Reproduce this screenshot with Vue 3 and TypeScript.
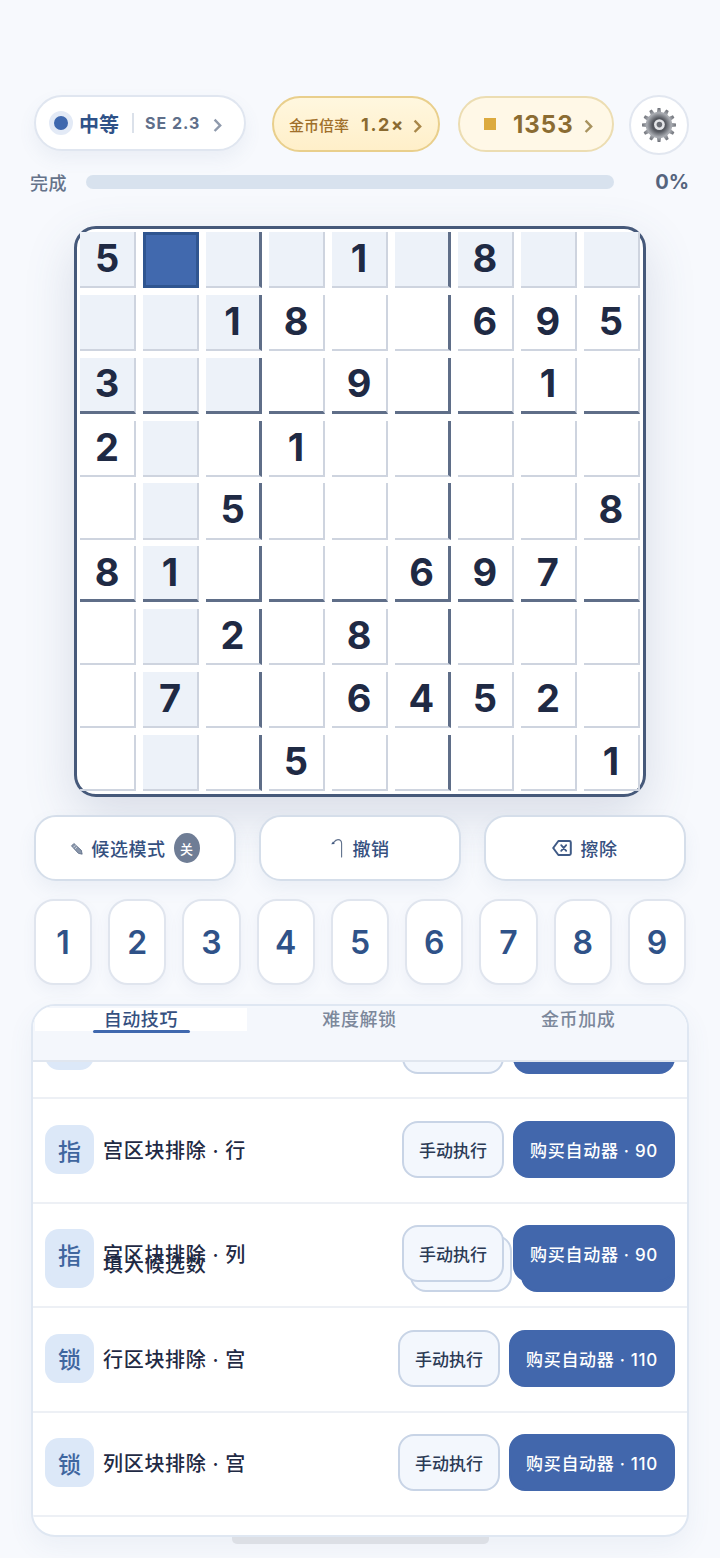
<script setup lang="ts">
interface Skill {
  icon: string
  title: string
  price: number
}

// 0 = empty cell
const puzzle: number[][] = [
  [5, 0, 0, 0, 1, 0, 8, 0, 0],
  [0, 0, 1, 8, 0, 0, 6, 9, 5],
  [3, 0, 0, 0, 9, 0, 0, 1, 0],
  [2, 0, 0, 1, 0, 0, 0, 0, 0],
  [0, 0, 5, 0, 0, 0, 0, 0, 8],
  [8, 1, 0, 0, 0, 6, 9, 7, 0],
  [0, 0, 2, 0, 8, 0, 0, 0, 0],
  [0, 7, 0, 0, 6, 4, 5, 2, 0],
  [0, 0, 0, 5, 0, 0, 0, 0, 1],
]

const selected = { row: 0, col: 1 }

const cells = puzzle.flatMap((line, row) =>
  line.map((value, col) => ({
    key: `${row}-${col}`,
    value,
    selected: row === selected.row && col === selected.col,
    related: row === selected.row || col === selected.col || (row < 3 && col < 3),
    boxRight: col === 2 || col === 5,
    boxBottom: row === 2 || row === 5,
  })),
)

const digits = [1, 2, 3, 4, 5, 6, 7, 8, 9]
const tabs = ['自动技巧', '难度解锁', '金币加成']

const skills: Skill[] = [
  { icon: '指', title: '宫区块排除 · 行', price: 90 },
  { icon: '指', title: '宫区块排除 · 行', price: 90 },
  { icon: '指', title: '宫区块排除 · 列', price: 90 },
  { icon: '锁', title: '行区块排除 · 宫', price: 110 },
  { icon: '锁', title: '列区块排除 · 宫', price: 110 },
]

const ghost: Skill = { icon: '填', title: '填入候选数', price: 11 }

// 12 tooth gear outline
const gearPath = (() => {
  const points: string[] = []
  const teeth = 12
  for (let i = 0; i < teeth; i++) {
    const a = (i / teeth) * Math.PI * 2
    const step = (Math.PI * 2) / teeth
    const ring: [number, number][] = [
      [13.2, a - step * 0.3],
      [17, a - step * 0.16],
      [17, a + step * 0.16],
      [13.2, a + step * 0.3],
    ]
    for (const [r, t] of ring) {
      points.push(`${(18 + r * Math.cos(t)).toFixed(2)} ${(18 + r * Math.sin(t)).toFixed(2)}`)
    }
  }
  return `M${points.join('L')}Z`
})()
</script>

<template>
  <div class="page">
    <header class="top-bar">
      <button class="level-pill">
        <span class="level-dot"></span>
        <span class="level-name">中等</span>
        <span class="level-divider"></span>
        <span class="level-se">SE 2.3</span>
        <svg class="chevron" width="9" height="14" viewBox="0 0 9 14">
          <path d="M1.6 1.6 7.2 7.4 1.6 13" fill="none" stroke="#8f9aac" stroke-width="2.4" />
        </svg>
      </button>
      <button class="rate-pill">
        <span class="rate-label">金币倍率</span>
        <span class="rate-value">1.2×</span>
        <svg class="chevron" width="9" height="14" viewBox="0 0 9 14">
          <path d="M1.6 1.6 7.2 7.4 1.6 13" fill="none" stroke="#a8874a" stroke-width="2.4" />
        </svg>
      </button>
      <button class="coin-pill">
        <span class="coin-mark"></span>
        <span class="coin-value">1353</span>
        <svg class="chevron" width="9" height="14" viewBox="0 0 9 14">
          <path d="M1.6 1.6 7.2 7.4 1.6 13" fill="none" stroke="#a8935f" stroke-width="2.4" />
        </svg>
      </button>
      <button class="settings" aria-label="设置">
        <svg width="36" height="36" viewBox="0 0 36 36">
          <defs>
            <radialGradient id="gearFill" cx="50%" cy="50%" r="50%">
              <stop offset="0%" stop-color="#4c4f56" />
              <stop offset="45%" stop-color="#63666d" />
              <stop offset="72%" stop-color="#a9acb2" />
              <stop offset="100%" stop-color="#6f7279" />
            </radialGradient>
          </defs>
          <path :d="gearPath" fill="url(#gearFill)" />
          <circle cx="18" cy="18" r="7.2" fill="#55585f" />
          <circle cx="18.4" cy="17.6" r="5.4" fill="#e4e5e8" />
          <circle cx="18.4" cy="17.6" r="2.8" fill="#6a6d74" />
        </svg>
      </button>
    </header>

    <section class="progress-row">
      <span class="progress-label">完成</span>
      <div class="progress-track"></div>
      <span class="progress-value">0%</span>
    </section>

    <section class="board">
      <div
        v-for="cell in cells"
        :key="cell.key"
        class="cell"
        :class="{
          related: cell.related,
          selected: cell.selected,
          'box-right': cell.boxRight,
          'box-bottom': cell.boxBottom,
        }"
      >
        {{ cell.value || '' }}
      </div>
    </section>

    <section class="actions">
      <button class="action">
        <svg width="13" height="13" viewBox="0 0 14 14">
          <path d="M1.6 4.2 4.2 1.6l8 7.4.9 4.1-4.1-.9z" fill="#8794a9" stroke="#5d6c86" stroke-width=".9" stroke-linejoin="round" />
          <path d="M3.6 5.8 5.8 3.6M5.4 7.4l2.2-2.2" stroke="#eef1f6" stroke-width=".8" />
        </svg>
        <span>候选模式</span>
        <span class="toggle-badge">关</span>
      </button>
      <button class="action">
        <svg width="14" height="20" viewBox="0 0 14 20">
          <path d="M11.6 19V5.6C11.6 3 10 1.6 8 1.6 6.4 1.6 5 2.6 3.6 4.6" fill="none" stroke="#5f708c" stroke-width="1.1" stroke-linecap="round" />
          <path d="M1.2 6.2 4.8 6 3 3.4z" fill="#41587f" />
        </svg>
        <span>撤销</span>
      </button>
      <button class="action">
        <svg width="20" height="18" viewBox="0 0 20 18">
          <path d="M6.4 2h11a1.4 1.4 0 0 1 1.4 1.4v11.2a1.4 1.4 0 0 1-1.4 1.4h-11L1.2 9z" fill="none" stroke="#3f5a86" stroke-width="2" stroke-linejoin="round" />
          <path d="M9.2 6.2l5 5.6M14.2 6.2l-5 5.6" stroke="#3f5a86" stroke-width="1.8" stroke-linecap="round" />
        </svg>
        <span>擦除</span>
      </button>
    </section>

    <section class="keypad">
      <button v-for="digit in digits" :key="digit" class="key">{{ digit }}</button>
    </section>

    <section class="panel">
      <nav class="tabs">
        <div v-for="(tab, i) in tabs" :key="tab" class="tab" :class="{ active: i === 0 }">{{ tab }}</div>
      </nav>
      <div class="list">
        <div v-for="(skill, i) in skills" :key="i" class="row">
          <div v-if="i === 2" class="row-body ghost">
            <span class="skill-icon">{{ ghost.icon }}</span>
            <span class="skill-title">{{ ghost.title }}</span>
            <button class="manual">手动执行</button>
            <button class="buy">购买自动器 · {{ ghost.price }}</button>
          </div>
          <div class="row-body">
            <span class="skill-icon">{{ skill.icon }}</span>
            <span class="skill-title">{{ skill.title }}</span>
            <button class="manual">手动执行</button>
            <button class="buy">购买自动器 · {{ skill.price }}</button>
          </div>
        </div>
      </div>
    </section>
    <div class="home-bar"></div>
  </div>
</template>

<style>
html,
body {
  margin: 0;
  background: #f7f9fd;
}
</style>

<style scoped>
.page {
  width: 720px;
  height: 1558px;
  box-sizing: border-box;
  padding-top: 95px;
  overflow: hidden;
  background: #f7f9fd;
  font-family: Inter, 'Noto Sans CJK SC', sans-serif;
  color: #1f2a44;
}

button {
  font-family: inherit;
  padding: 0;
  cursor: pointer;
}

.top-bar {
  display: flex;
  align-items: flex-start;
  padding-left: 34px;
}

.level-pill,
.rate-pill,
.coin-pill {
  display: flex;
  align-items: center;
  box-sizing: border-box;
  height: 56px;
  border-radius: 28px;
}

.level-pill {
  width: 212px;
  padding-left: 13px;
  background: #fff;
  border: 2px solid #e0e6f0;
  box-shadow: 0 8px 18px rgba(90, 110, 150, 0.08);
}

.level-dot {
  width: 14px;
  height: 14px;
  border-radius: 50%;
  background: #3f68ae;
  border: 5px solid #e3eaf6;
}

.level-name {
  margin-left: 6px;
  font-size: 20px;
  font-weight: 700;
  color: #2f5288;
}

.level-divider {
  width: 2px;
  height: 20px;
  margin-left: 13px;
  background: #dbe1ea;
}

.level-se {
  margin-left: 11px;
  font-size: 16px;
  font-weight: 700;
  letter-spacing: 1px;
  color: #5f6f8a;
}

.chevron {
  flex: none;
  margin-top: 3px;
  margin-left: 13px;
}

.rate-pill {
  width: 168px;
  margin-left: 26px;
  margin-top: 1px;
  padding-left: 15px;
  background: linear-gradient(180deg, #fff7df, #ffefc9);
  border: 2px solid #e9cf8c;
}

.rate-label {
  font-size: 15px;
  font-weight: 500;
  color: #a06f2a;
}

.rate-value {
  margin-left: 12px;
  font-size: 18px;
  font-weight: 700;
  letter-spacing: 1.6px;
  color: #8a6a30;
}

.rate-pill .chevron {
  margin-left: 8px;
}

.coin-pill {
  width: 156px;
  margin-left: 18px;
  margin-top: 1px;
  padding-left: 24px;
  background: #fff8e7;
  border: 2px solid #ecddb2;
}

.coin-mark {
  width: 12px;
  height: 12px;
  background: #dcaa3e;
}

.coin-value {
  margin-left: 17px;
  font-size: 24px;
  font-weight: 700;
  letter-spacing: 1px;
  color: #8b6c32;
}

.coin-pill .chevron {
  margin-left: 10px;
}

.settings {
  display: flex;
  align-items: center;
  justify-content: center;
  box-sizing: border-box;
  width: 60px;
  height: 60px;
  margin-left: 15px;
  border-radius: 50%;
  background: #fff;
  border: 2px solid #e2e7f0;
}

.progress-row {
  display: flex;
  align-items: center;
  height: 22px;
  margin-top: 16px;
  padding: 0 31px 0 30px;
}

.progress-label {
  width: 56px;
  font-size: 18px;
  font-weight: 500;
  letter-spacing: 0.5px;
  color: #65738a;
}

.progress-track {
  width: 528px;
  height: 14px;
  border-radius: 7px;
  background: #d8e2ee;
}

.progress-value {
  margin-left: auto;
  font-size: 20px;
  font-weight: 700;
  color: #55647d;
}

.board {
  display: grid;
  grid-template-columns: repeat(9, 1fr);
  grid-template-rows: repeat(9, 1fr);
  gap: 6.8px;
  box-sizing: border-box;
  width: 572px;
  height: 571px;
  margin: 33px 0 0 74px;
  padding: 3px;
  background: #fff;
  border: 3px solid #46597a;
  border-radius: 22px;
  box-shadow: 0 18px 50px rgba(70, 90, 130, 0.18);
}

.cell {
  display: flex;
  align-items: center;
  justify-content: center;
  box-sizing: border-box;
  padding-bottom: 2px;
  font-size: 38px;
  font-weight: 700;
  line-height: 1;
  color: #1f2a44;
  border-right: 2px solid #ced4df;
  border-bottom: 2px solid #ced4df;
}

.cell.related {
  background: #edf2f9;
}

.cell.box-right {
  border-right: 3px solid #5f6e88;
}

.cell.box-bottom {
  border-bottom: 3px solid #5f6e88;
}

.cell.selected {
  background: #4169ae;
  border: 3px solid #2f5590;
}

.actions {
  display: flex;
  gap: 23px;
  margin: 18px 34px 0;
}

.action {
  display: flex;
  flex: 1;
  align-items: center;
  justify-content: center;
  gap: 8px;
  height: 66px;
  background: #fff;
  border: 2px solid #d5deea;
  border-radius: 22px;
  font-size: 18px;
  font-weight: 500;
  letter-spacing: 0.6px;
  color: #35507f;
  box-shadow: 0 8px 18px rgba(90, 110, 150, 0.08);
}

.toggle-badge {
  display: flex;
  align-items: center;
  justify-content: center;
  width: 26px;
  height: 30px;
  border-radius: 50%;
  background: #6f7d95;
  font-size: 13px;
  color: #fff;
}

.keypad {
  display: grid;
  grid-template-columns: repeat(9, 1fr);
  gap: 16px;
  margin: 18px 34px 0;
}

.key {
  height: 86px;
  background: #fff;
  border: 2px solid #e0e5ee;
  border-radius: 20px;
  font-size: 32px;
  font-weight: 600;
  color: #2f5288;
  box-shadow: 0 6px 14px rgba(90, 110, 150, 0.06);
}

.panel {
  display: flex;
  flex-direction: column;
  box-sizing: border-box;
  width: 658px;
  height: 533px;
  margin: 19px 0 0 31px;
  overflow: hidden;
  background: #fff;
  border: 2px solid #dfe7f2;
  border-radius: 24px;
  box-shadow: 0 10px 26px rgba(90, 110, 150, 0.07);
}

.tabs {
  display: grid;
  flex: none;
  grid-template-columns: repeat(3, 1fr);
  gap: 7px;
  box-sizing: border-box;
  height: 56px;
  padding: 2px 3px 0 2px;
  background: #f4f7fc;
  border-bottom: 2px solid #e0e6ef;
}

.tab {
  position: relative;
  height: 23px;
  font-size: 18px;
  font-weight: 500;
  line-height: 23px;
  letter-spacing: 0.6px;
  text-align: center;
  color: #7c889b;
}

.tab.active {
  background: #fff;
  color: #35507f;
}

.tab.active::after {
  content: '';
  position: absolute;
  left: 58px;
  bottom: -2px;
  width: 97px;
  height: 3px;
  border-radius: 2px;
  background: #3f68ae;
}

.list {
  flex: 1;
  overflow: hidden;
}

.row {
  position: relative;
  box-sizing: border-box;
  height: 104.4px;
  border-bottom: 2px solid #edf0f5;
}

.row:first-child {
  margin-top: -67px;
}

.row-body {
  position: relative;
  display: flex;
  align-items: center;
  box-sizing: border-box;
  height: 100%;
  padding: 0 12px 2px 12px;
}

.row-body.ghost {
  position: absolute;
  top: 10px;
  left: 0;
  right: 0;
}

.skill-icon {
  display: flex;
  flex: none;
  align-items: center;
  justify-content: center;
  width: 49px;
  height: 49px;
  border-radius: 14px;
  background: #dce8f8;
  font-size: 23px;
  font-weight: 500;
  color: #3f669f;
}

.skill-title {
  margin-left: 9px;
  margin-right: auto;
  font-size: 20px;
  font-weight: 500;
  letter-spacing: 0.7px;
  color: #1f2a44;
}

.manual,
.buy {
  box-sizing: border-box;
  height: 57px;
  border-radius: 16px;
  font-size: 17px;
  font-weight: 500;
}

.manual {
  flex: none;
  padding: 0 15px;
  background: #f3f7fd;
  border: 2px solid #c8d4e6;
  color: #2b3a55;
}

.buy {
  flex: none;
  margin-left: 9px;
  padding: 0 15px;
  letter-spacing: 0.7px;
  background: #4267ac;
  border: 2px solid #4267ac;
  color: #fff;
}

.home-bar {
  width: 257px;
  height: 7px;
  margin-left: 232px;
  border-radius: 0 0 5px 5px;
  background: #dcdfe5;
}
</style>
